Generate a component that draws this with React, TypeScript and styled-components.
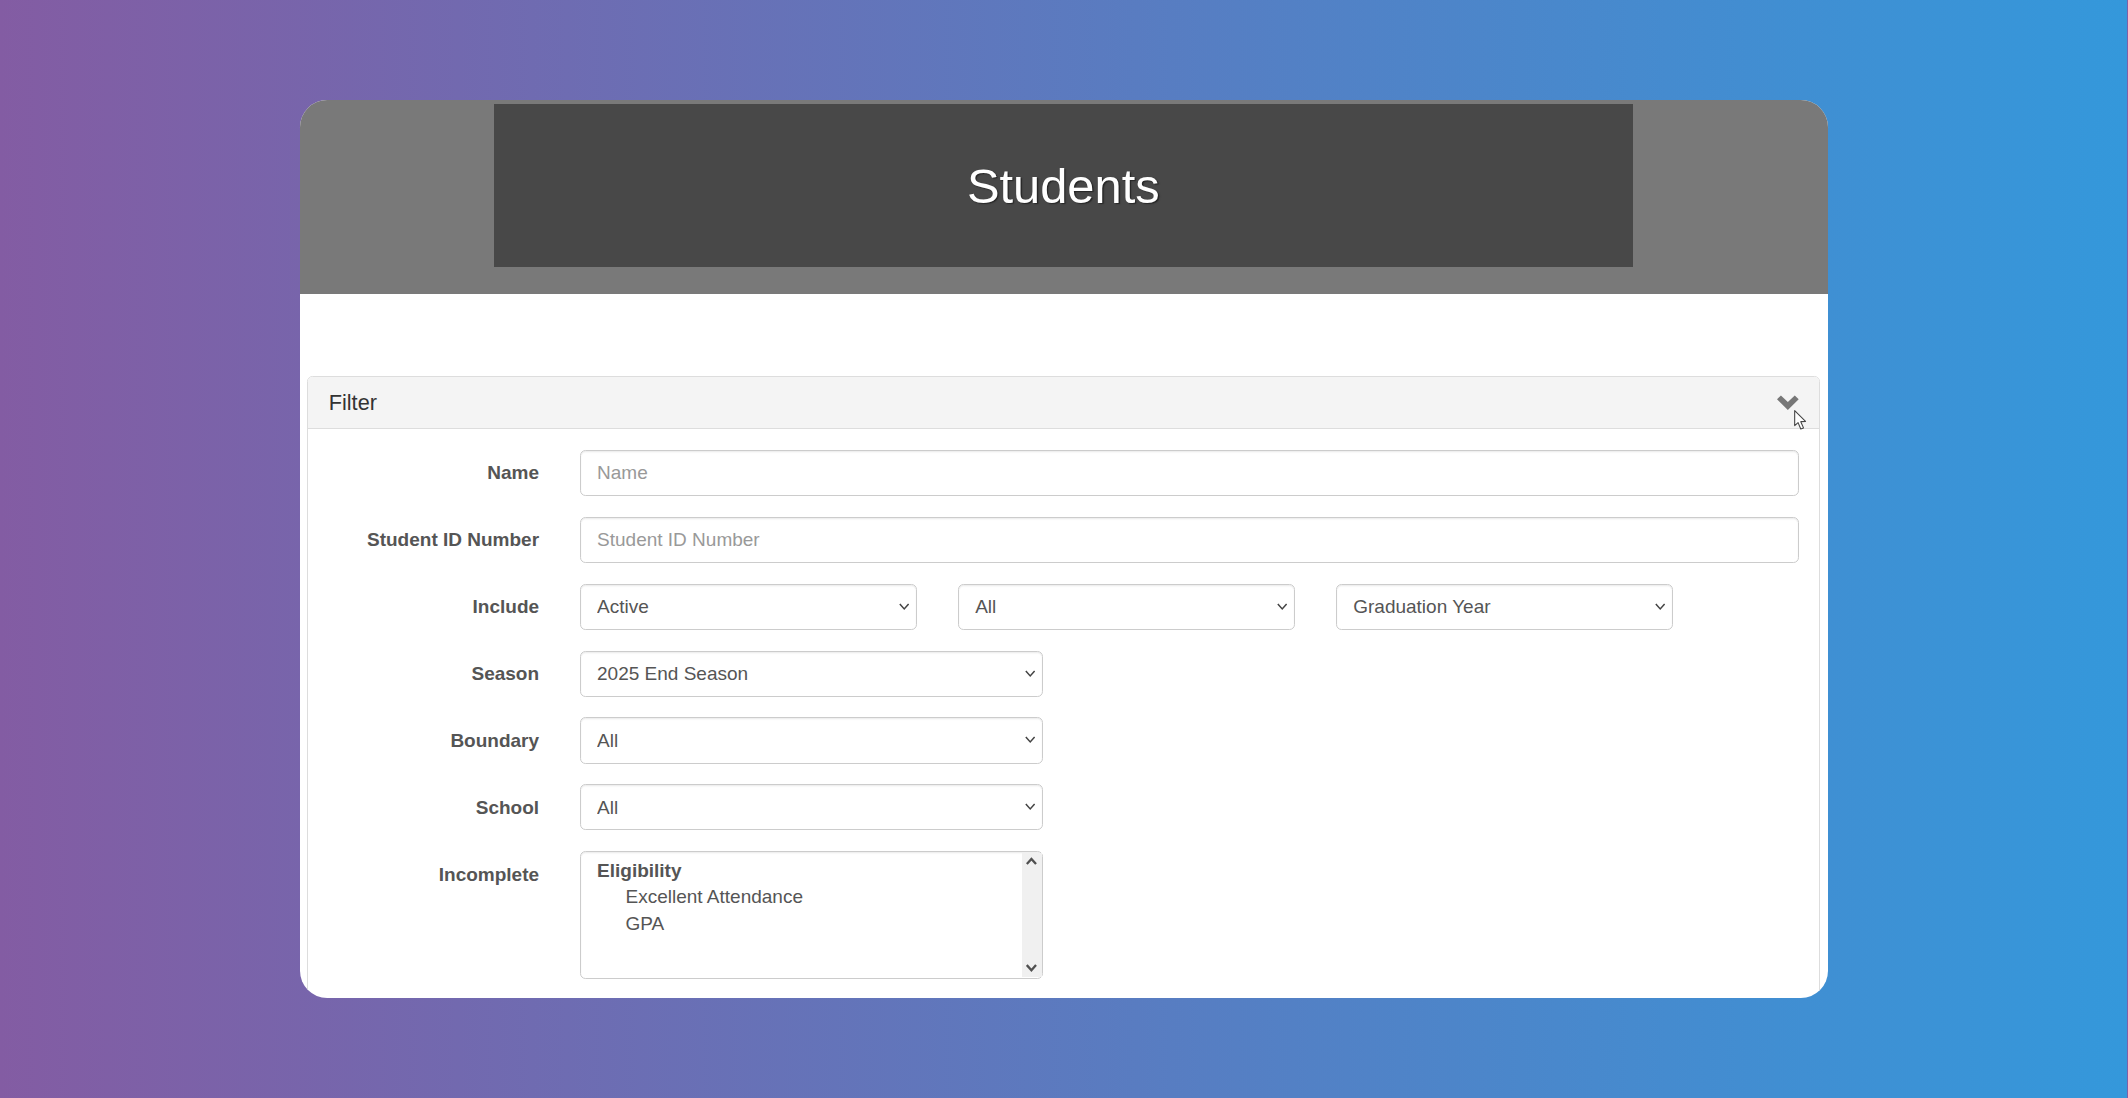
import styled, { createGlobalStyle } from "styled-components";

/* The reference is a 1568x809 page shown at a 1.357 device scale. */

const selectArrow = `url("data:image/svg+xml,%3Csvg xmlns='http://www.w3.org/2000/svg' width='8' height='6' viewBox='0 0 8 6'%3E%3Cpath d='M0.6 0.8 L3.8 4.4 L7 0.8' fill='none' stroke='%23444' stroke-width='1.1'/%3E%3C/svg%3E")`;

const Global = createGlobalStyle`
  html, body {
    margin: 0;
    padding: 0;
    overflow: hidden;
  }
`;

const Page = styled.div`
  zoom: 1.357143;
  width: 1568px;
  height: 809px;
  display: flex;
  align-items: center;
  justify-content: center;
  /* the gradient tile ends just short of the window, so it wraps on the far right */
  background: linear-gradient(to right, #835ca3, #3498db) 0 0 / 1567.3px 100% repeat-x;
  font-family: "Liberation Sans", Arial, sans-serif;
  font-size: 14px;
  color: #555;
`;

const Card = styled.div`
  width: 1125.4px;
  height: 661.5px;
  background: #fff;
  border-radius: 20px;
  overflow: hidden;
`;

const Banner = styled.header`
  height: 143px;
  padding-top: 3px;
  box-sizing: border-box;
  background: #797979;
`;

const TitleBlock = styled.div`
  width: 839px;
  height: 120px;
  margin-left: 142.7px;
  display: flex;
  align-items: center;
  justify-content: center;
  background: #484848;
`;

const Title = styled.h1`
  margin: 0;
  font-size: 36px;
  font-weight: 400;
  color: #fff;
  text-shadow: 1px 1px 1px rgba(0, 0, 0, 0.5);
`;

const Panel = styled.section`
  position: relative;
  margin: 60px 5.7px 0 5.2px;
  border: 1px solid #ddd;
  border-radius: 4px;
`;

const PanelHeading = styled.div`
  display: flex;
  align-items: center;
  justify-content: space-between;
  height: 39px;
  box-sizing: border-box;
  padding: 0 15px;
  background: #f4f4f4;
  border-bottom: 1px solid #ddd;
  border-radius: 3px 3px 0 0;
  font-size: 16px;
  color: #333;
`;

const Chevron = styled.svg`
  width: 16px;
  height: 11px;
  fill: #777;
`;

const Pointer = styled.svg`
  position: absolute;
  top: 25px;
  right: 8.3px;
  width: 10px;
  height: 15px;
`;

const PanelBody = styled.div`
  padding: 15px 15px 30px;
`;

const Field = styled.div`
  display: grid;
  grid-template-columns: 155px 1fr;
  column-gap: 30px;
  margin-bottom: 15.3px;
`;

const Label = styled.label`
  padding-top: 7px;
  text-align: right;
  font-weight: 700;
  line-height: 20px;
`;

const Controls = styled.div`
  display: flex;
  gap: 30px;
`;

const TextInput = styled.input`
  box-sizing: border-box;
  width: 100%;
  height: 34px;
  padding: 6px 12px;
  border: 1px solid #ccc;
  border-radius: 4px;
  box-shadow: inset 0 1px 1px rgba(0, 0, 0, 0.075);
  font: inherit;
  color: #555;

  &::placeholder {
    color: #999;
    opacity: 1;
  }
`;

const Select = styled.select<{ $width: number }>`
  appearance: none;
  box-sizing: border-box;
  width: ${(p) => p.$width}px;
  height: 34px;
  padding: 6px 12px;
  border: 1px solid #ccc;
  border-radius: 4px;
  background: #fff ${selectArrow} no-repeat right 4.5px center;
  box-shadow: inset 0 1px 1px rgba(0, 0, 0, 0.075);
  font: inherit;
  color: #555;
`;

const ListWrap = styled.div`
  position: relative;
  width: 341.5px;
  height: 94px;
`;

const ListBox = styled.select`
  display: block;
  box-sizing: border-box;
  width: 100%;
  height: 100%;
  padding: 6px 0 0 12px;
  border: 1px solid #ccc;
  border-radius: 4px;
  background: #fff;
  box-shadow: inset 0 1px 1px rgba(0, 0, 0, 0.075);
  font: inherit;
  color: #555;

  optgroup {
    padding-left: 0;
    margin-left: -2px;
  }

  option {
    padding: 2px 0 0 23px;
    min-height: 18px;
  }

  option:first-of-type {
    margin-top: -1px;
  }
`;

const ScrollBar = styled.div`
  position: absolute;
  top: 1px;
  right: 1px;
  bottom: 1px;
  width: 15px;
  display: flex;
  flex-direction: column;
  align-items: center;
  justify-content: space-between;
  padding: 3.5px 0 4px;
  box-sizing: border-box;
  background: #f0f0f0;
`;

const ScrollArrow = styled.svg`
  width: 8px;
  height: 6px;
  fill: none;
  stroke: #505050;
  stroke-width: 1.7;
`;

const textFields = ["Name", "Student ID Number"];

const singleSelects = [
  { label: "Season", value: "2025 End Season" },
  { label: "Boundary", value: "All" },
  { label: "School", value: "All" },
];

export default function App() {
  return (
    <Page>
      <Global />
      <Card>
        <Banner>
          <TitleBlock>
            <Title>Students</Title>
          </TitleBlock>
        </Banner>
        <Panel>
          <PanelHeading>
            Filter
            <Chevron viewBox="0 0 16 11">
              <polygon points="0,3.2 2.9,0.3 8,5.2 13.1,0.3 16,3.2 8,11" />
            </Chevron>
          </PanelHeading>
          <Pointer viewBox="0 0 10 15">
            <path
              d="M0.5 0.5 L0.5 11.5 L3 9.3 L5 14 L7 13.2 L5 8.6 L8.5 8.4 Z"
              fill="#fff"
              stroke="#444"
              strokeWidth="0.8"
              strokeLinejoin="round"
            />
          </Pointer>
          <PanelBody>
            {textFields.map((name) => (
              <Field key={name}>
                <Label>{name}</Label>
                <TextInput placeholder={name} />
              </Field>
            ))}
            <Field>
              <Label>Include</Label>
              <Controls>
                <Select $width={248.6} defaultValue="Active">
                  <option>Active</option>
                </Select>
                <Select $width={248.6} defaultValue="All">
                  <option>All</option>
                </Select>
                <Select $width={248.6} defaultValue="Graduation Year">
                  <option>Graduation Year</option>
                </Select>
              </Controls>
            </Field>
            {singleSelects.map((s) => (
              <Field key={s.label}>
                <Label>{s.label}</Label>
                <Controls>
                  <Select $width={341.5} defaultValue={s.value}>
                    <option>{s.value}</option>
                  </Select>
                </Controls>
              </Field>
            ))}
            <Field>
              <Label>Incomplete</Label>
              <ListWrap>
                <ListBox multiple defaultValue={[]}>
                  <optgroup label="Eligibility">
                    <option>Excellent Attendance</option>
                    <option>GPA</option>
                  </optgroup>
                </ListBox>
                <ScrollBar>
                  <ScrollArrow viewBox="0 0 8 6">
                    <path d="M0.6 5.2 L4 1.4 L7.4 5.2" />
                  </ScrollArrow>
                  <ScrollArrow viewBox="0 0 8 6">
                    <path d="M0.6 0.8 L4 4.6 L7.4 0.8" />
                  </ScrollArrow>
                </ScrollBar>
              </ListWrap>
            </Field>
          </PanelBody>
        </Panel>
      </Card>
    </Page>
  );
}
